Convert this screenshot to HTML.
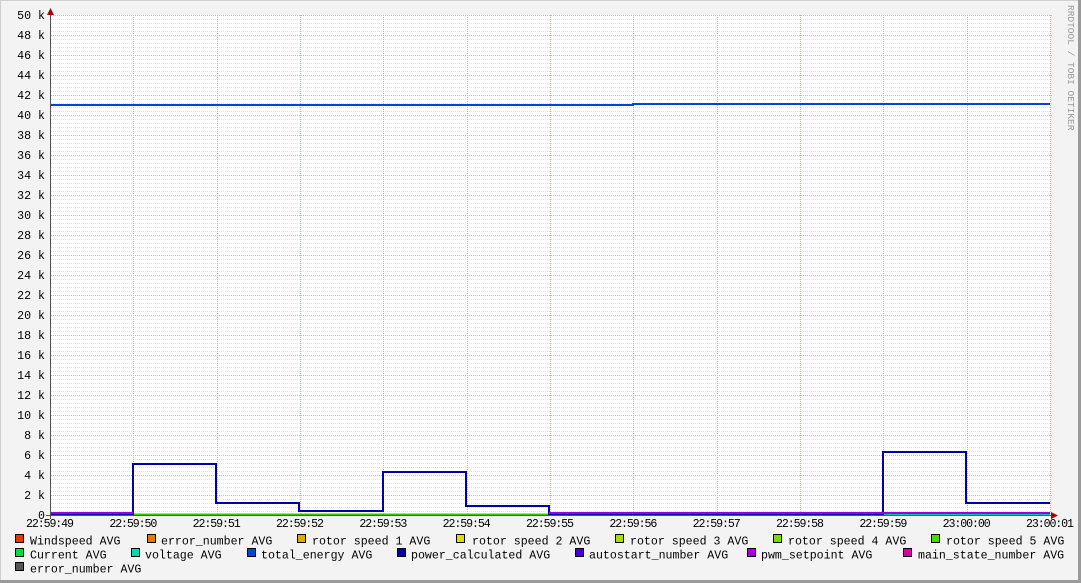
<!DOCTYPE html>
<html><head><style>
body{margin:0;background:#f3f3f3}
svg{display:block}
text{font-family:"Liberation Mono","DejaVu Sans Mono",monospace;font-size:11.6px;fill:#000}
</style></head><body>
<svg width="1081" height="583" xmlns="http://www.w3.org/2000/svg">
<rect x="0" y="0" width="1081" height="583" fill="#f3f3f3"/>
<line x1="0" y1="0.5" x2="1081" y2="0.5" stroke="#cfcfcf"/>
<line x1="0.5" y1="0" x2="0.5" y2="583" stroke="#cfcfcf"/>
<line x1="1079.5" y1="0" x2="1079.5" y2="583" stroke="#9a9a9a" stroke-width="3"/>
<line x1="0" y1="581.5" x2="1081" y2="581.5" stroke="#9a9a9a" stroke-width="3"/>
<rect x="50" y="15" width="1001" height="500" fill="#fff"/>
<g id="grid"></g>
<g fill="none" stroke-width="2">
<polyline points="50,514.5 633,514.5" stroke="#33cc00"/>
<polyline points="633,514.5 1050,514.5" stroke="#00ccaa"/>
<polyline points="50,105 633,105 633,104 1050,104" stroke="#0044dd"/>
<polyline points="50,514 133,514 133,464 216,464 216,503 299,503 299,511 383,511 383,472 466,472 466,506 549,506 549,514 883,514 883,452 966,452 966,503 1050,503" stroke="#0000aa"/>
<polyline points="50,513 133,513" stroke="#9900dd"/>
<polyline points="549,513 1050,513" stroke="#9900dd"/>
</g>
<line x1="50.5" y1="10" x2="50.5" y2="519" stroke="#555"/>
<line x1="46" y1="515.5" x2="1054" y2="515.5" stroke="#555"/>
<polygon points="47,15 54,15 50.5,8" fill="#a00"/>
<polygon points="1051,512 1051,519 1058,515.5" fill="#a00"/>
<g id="lbl"></g>
<text x="1068" y="5" transform="rotate(90 1068 5)" style="font-size:9.5px;fill:#999">RRDTOOL / TOBI OETIKER</text>
<g id="leg"></g>
</svg>
<script>
var ns="http://www.w3.org/2000/svg";
function el(t,a,p,txt){var e=document.createElementNS(ns,t);for(var k in a)e.setAttribute(k,a[k]);if(txt)e.textContent=txt;document.getElementById(p).appendChild(e);return e;}
for(var y=15;y<515;y+=4){var maj=((y-15)%20==0);el('line',{x1:51,x2:1053,y1:y+0.5,y2:y+0.5,stroke:maj?'#e6a8a8':'#e2e2e2','stroke-dasharray':'1,1'},'grid');}
for(var i=1;i<=12;i++){var x=Math.round(50+i*1000/12)+0.5;el('line',{x1:x,x2:x,y1:15,y2:515,stroke:'#e6a8a8','stroke-dasharray':'1,1'},'grid');}
for(var v=0;v<=50;v+=2){var y=515-v*10;el('text',{x:45,y:y+4,'text-anchor':'end'},'lbl',v==0?'0':v+' k');}
var t=['22:59:49','22:59:50','22:59:51','22:59:52','22:59:53','22:59:54','22:59:55','22:59:56','22:59:57','22:59:58','22:59:59','23:00:00','23:00:01'];
for(var i=0;i<13;i++){var cx=50+i*1000/12;el('text',{x:cx-24,y:527,textLength:48,lengthAdjust:'spacing',style:'font-size:11.6px'},'lbl',t[i]);}
var L=[
[15,30,'#ee3300','Windspeed AVG',541],[147,161,'#ee7700','error_number AVG',541],[297,312,'#ddaa00','rotor speed 1 AVG',541],[456,472,'#dddd00','rotor speed 2 AVG',541],[615,630,'#aadd00','rotor speed 3 AVG',541],[773,788,'#77dd00','rotor speed 4 AVG',541],[931,946,'#44dd00','rotor speed 5 AVG',541],
[15,30,'#00dd44','Current AVG',555],[131,145,'#00ddaa','voltage AVG',555],[247,261,'#0044dd','total_energy AVG',555],[397,411,'#0000aa','power_calculated AVG',555],[575,589,'#4400dd','autostart_number AVG',555],[747,761,'#aa00dd','pwm_setpoint AVG',555],[903,918,'#dd0099','main_state_number AVG',555],
[15,30,'#555555','error_number AVG',569]];
L.forEach(function(r){el('rect',{x:r[0]+0.5,y:r[4]-6.5,width:8,height:8,fill:r[2],stroke:'#000'},'leg');el('text',{x:r[1],y:r[4]+3.5},'leg',r[3]);});
</script>
</body></html>
